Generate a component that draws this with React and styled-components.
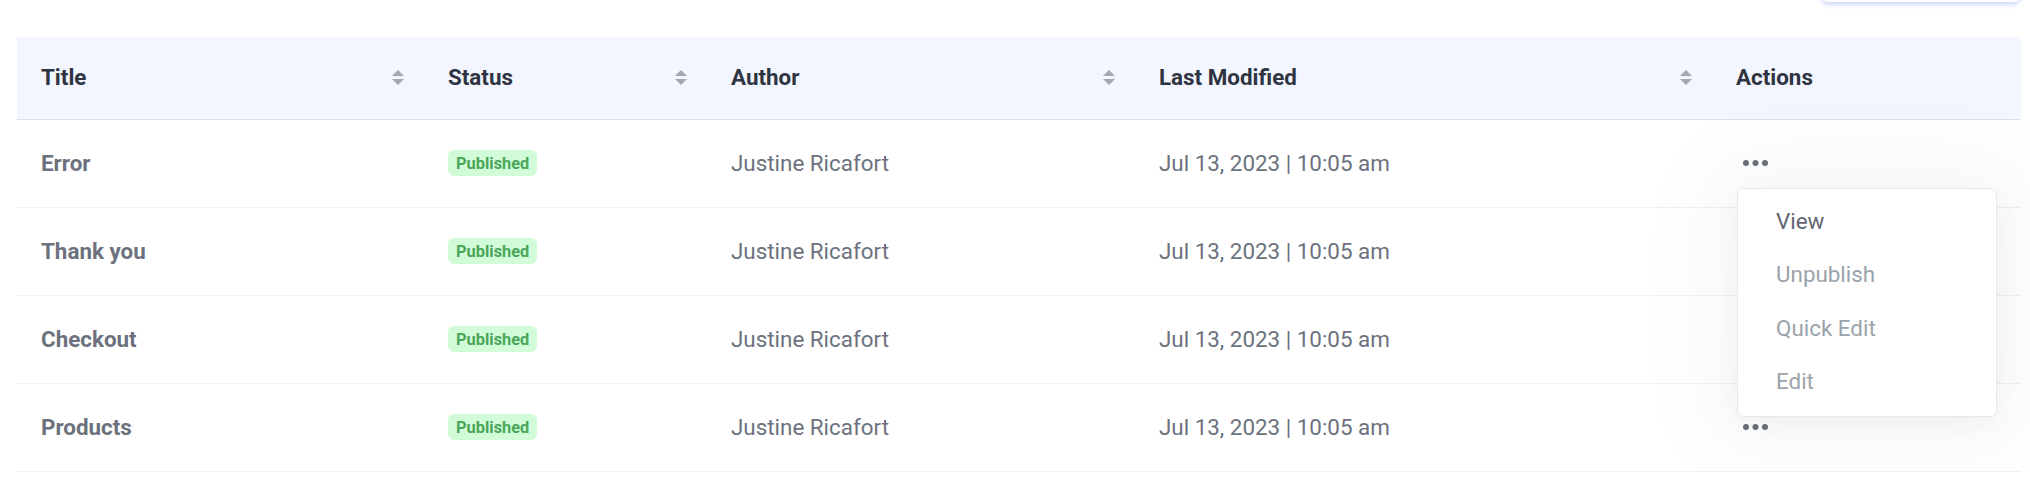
import React from "react";
import styled, { createGlobalStyle } from "styled-components";

const GlobalStyle = createGlobalStyle`
  html, body { margin: 0; padding: 0; background: #ffffff; }
  body { font-family: Roboto, "Noto Sans", "Liberation Sans", sans-serif; -webkit-font-smoothing: antialiased; }
  * { box-sizing: border-box; }
`;

const COLS = "407px 283px 428px 577px 1fr";

const Page = styled.div`
  padding: 0 9px 0 17px;
  width: 2030px;
  overflow: hidden;
`;

const Toolbar = styled.div`
  display: flex;
  justify-content: flex-end;
  margin-top: -40px;
  margin-bottom: 35px;
  padding-right: 1px;
`;

const TopButton = styled.button`
  width: 198px;
  height: 42px;
  border: none;
  border-radius: 6px;
  background: #ffffff;
  box-shadow: 0 2px 5px rgba(84, 120, 240, 0.35);
`;

const Table = styled.div`
  display: flex;
  flex-direction: column;
`;

const HeaderRow = styled.div`
  display: grid;
  grid-template-columns: ${COLS};
  height: 83px;
  background: #f3f6fe;
  border-bottom: 1px solid #dde1e8;
`;

const BodyRow = styled.div`
  display: grid;
  grid-template-columns: ${COLS};
  height: 88px;
  border-bottom: 1px solid #eef0f3;
`;

const HeadCell = styled.div`
  display: flex;
  align-items: center;
  justify-content: space-between;
  padding: 0 20px 2px 24px;
  font-size: 22.4px;
  font-weight: 700;
  color: #2e3441;
`;

const Cell = styled.div`
  position: relative;
  display: flex;
  align-items: center;
  padding: 0 20px 1px 24px;
  font-size: 22.4px;
  font-weight: ${(p) => (p.$strong ? 700 : 400)};
  color: #6c727d;
`;

const Badge = styled.span`
  display: inline-flex;
  align-items: center;
  height: 26px;
  padding: 0 8px;
  border-radius: 6px;
  background: #d2fcd8;
  color: #4ba65a;
  font-size: 16.4px;
  font-weight: 700;
`;

const DotsButton = styled.button`
  display: flex;
  align-items: center;
  padding: 0;
  margin-left: 7px;
  border: none;
  background: transparent;
  height: 20px;
`;

const Menu = styled.div`
  position: absolute;
  top: 68px;
  left: 25px;
  width: 260px;
  z-index: 5;
  padding: 5px 0 8px;
  background: #ffffff;
  border: 1px solid #e6e8ec;
  border-radius: 7px;
  box-shadow: 0 0 90px 30px rgba(0, 0, 0, 0.035), 0 6px 24px rgba(0, 0, 0, 0.04);
`;

const MenuItem = styled.div`
  height: 53.5px;
  display: flex;
  align-items: center;
  padding-left: 38px;
  font-size: 22.4px;
  color: ${(p) => (p.$active ? "#5f6672" : "#9aa3ab")};
`;

const SortIcon = () => (
  <svg width="12" height="15" viewBox="0 0 12 15">
    <path d="M6 0 L12 6 L0 6 Z" fill="#a2a7b0" />
    <path d="M0 9 L12 9 L6 15 Z" fill="#a2a7b0" />
  </svg>
);

const Dots = () => (
  <svg width="25" height="6" viewBox="0 0 25 6">
    <circle cx="3" cy="3" r="3" fill="#6b717b" />
    <circle cx="12.5" cy="3" r="3" fill="#6b717b" />
    <circle cx="22" cy="3" r="3" fill="#6b717b" />
  </svg>
);

const rows = ["Error", "Thank you", "Checkout", "Products"];
const menuItems = ["View", "Unpublish", "Quick Edit", "Edit"];

export default function App() {
  return (
    <>
      <GlobalStyle />
      <Page>
        <Toolbar>
          <TopButton aria-label="Add new page" />
        </Toolbar>
        <Table>
          <HeaderRow>
            <HeadCell>Title<SortIcon /></HeadCell>
            <HeadCell>Status<SortIcon /></HeadCell>
            <HeadCell>Author<SortIcon /></HeadCell>
            <HeadCell>Last Modified<SortIcon /></HeadCell>
            <HeadCell>Actions</HeadCell>
          </HeaderRow>
          {rows.map((title, i) => (
            <BodyRow key={title}>
              <Cell $strong>{title}</Cell>
              <Cell><Badge>Published</Badge></Cell>
              <Cell>Justine Ricafort</Cell>
              <Cell>Jul 13, 2023 | 10:05 am</Cell>
              <Cell>
                <DotsButton aria-label="More actions"><Dots /></DotsButton>
                {i === 0 && (
                  <Menu>
                    {menuItems.map((m, k) => (
                      <MenuItem key={m} $active={k === 0}>{m}</MenuItem>
                    ))}
                  </Menu>
                )}
              </Cell>
            </BodyRow>
          ))}
        </Table>
      </Page>
    </>
  );
}
